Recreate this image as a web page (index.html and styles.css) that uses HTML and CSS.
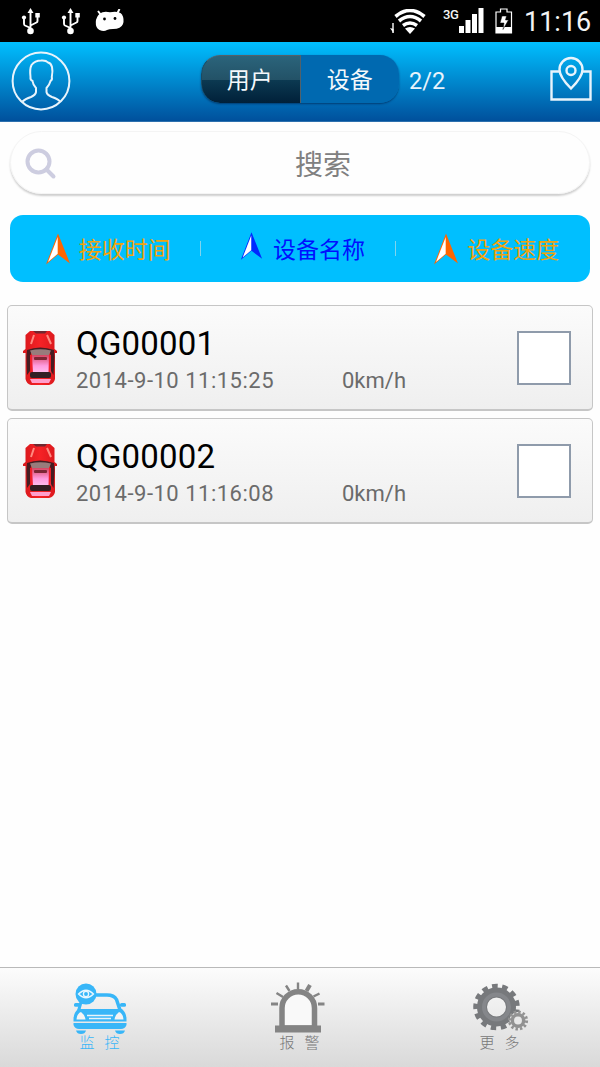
FILE: index.html
```html
<!DOCTYPE html>
<html lang="zh-CN">
  <head>
    <meta charset="utf-8">
    <meta name="viewport" content="width=device-width, initial-scale=1.0">
    <title>监控</title>
    <link rel="stylesheet" href="styles.css">
  </head>

  <body>

    <!-- shared icons -->
    <svg class="defs" width="0" height="0">
      <linearGradient id="carRed" x1="0" y1="0" x2="1" y2="0">
        <stop offset="0" stop-color="#d8181c"/>
        <stop offset=".5" stop-color="#f62226"/>
        <stop offset="1" stop-color="#d8181c"/>
      </linearGradient>
      <linearGradient id="carRoof" x1="0" y1="0" x2="0" y2="1">
        <stop offset="0" stop-color="#d64560"/>
        <stop offset=".6" stop-color="#ff9ce0"/>
        <stop offset="1" stop-color="#ffc0ee"/>
      </linearGradient>
      <symbol id="usb" viewBox="0 0 20 28">
        <path d="M9.500 23V4M9.500 20L4 17.500Q3 17 3 15.500V10M9.500 17.500L15.500 14.500Q16.500 14 16.500 13V8" fill="none" stroke="#fff" stroke-width="1.900"/>
        <path d="M9.500 0L12.500 5H6.500z" fill="#fff"/>
        <circle cx="9.500" cy="23" r="3.300" fill="#fff"/>
        <circle cx="3" cy="9.500" r="2.100" fill="#fff"/>
        <rect x="14.300" y="5" width="4.500" height="4.500" fill="#fff"/>
      </symbol>
      <symbol id="arrow" viewBox="0 0 26 32">
        <path d="M13 .5L25 30.500L13 21.500L1 31.500z" fill="currentColor"/>
        <path d="M12.700 4V20.800L3 29z" fill="#fff"/>
      </symbol>
      <symbol id="car" viewBox="0 0 34 54">
        <path d="M7 0H27L31.500 4V18L34 20V22L32 22V48Q31 53 26 54H8Q3.500 53 2.500 48V22L0 22V20L2.500 18V4z" fill="url(#carRed)"/>
        <path d="M10 0H24L22 2.500H13z" fill="#702830"/>
        <path d="M11 4L8 13M24 4L28 13" stroke="#ff8a80" stroke-width="2"/>
        <path d="M4 19Q17 14 31 19L31.500 26L30.500 44L28 40V27L27 22H8L7 27V40L4 44L3.500 26z" fill="#451d22"/>
        <path d="M7 19.500Q17 17 28 19.500L26 24H9z" fill="#987c7c"/>
        <path d="M9 24H26L27.500 42H8z" fill="url(#carRoof)"/>
        <path d="M8 24L9 42M27 24L26.500 42" stroke="#f0202c" stroke-width="2"/>
        <rect x="11" y="26" width="13" height="3" rx="1" fill="#7c2735"/>
        <rect x="7" y="41" width="21" height="6" rx="2" fill="#332024"/>
        <path d="M7 48H28L26 52H9z" fill="#ff9fcb"/>
      </symbol>
    </svg>

    <div class="screen">

      <div class="status">
        <svg class="usb" width="20" height="28"><use href="#usb"/></svg>
        <svg class="usb" width="20" height="28"><use href="#usb"/></svg>
        <svg class="droid" width="30" height="24" viewBox="0 0 30 24">
          <path d="M3 2L6 6M24.500 0L22 5" stroke="#fff" stroke-width="2"/>
          <path d="M5 4.500Q8 2 15 3.200Q24 1.500 27 5.500Q29.500 10 28 15Q26 20 18 20Q14 20 12 21Q9 23 4.500 21Q.5 19 .8 13Q1 8 5 4.500z" fill="#fff"/>
          <circle cx="9.500" cy="10" r="1.400"/><circle cx="20" cy="9.500" r="1.400"/>
        </svg>
        <svg class="wifi" width="36" height="26" viewBox="0 0 36 26">
          <path d="M3 14V24" stroke="#fff" stroke-width="1.400"/>
          <path d="M3.500 24V20L0 19z" fill="#fff"/>
          <path d="M5.500 7.500Q20 -4.500 34.500 7.500M9 12Q20 3 31 12M13 16.500Q20 11.500 27 16.500" fill="none" stroke="#fff" stroke-width="3.600"/>
          <path d="M15 19.500Q20 16.500 25 19.500L20 25z" fill="#fff"/>
        </svg>
        <span class="net">3G</span>
        <svg class="signal" width="26" height="26" viewBox="0 0 26 26" fill="#fff">
          <path d="M0 18h5v7H0zM6.500 12h5v13h-5zM13 6h5v19h-5zM19.500 0h5v25h-5z"/>
        </svg>
        <svg class="battery" width="18" height="27" viewBox="0 0 18 27">
          <path d="M1 4H5.500V1H12V4H16.500V25H1z" fill="none" stroke="#fff" stroke-width="1.200"/>
          <path d="M1 19H16.500V25H1z" fill="#fff"/>
          <path d="M7 8H11.500L10.500 12H13.500L8 21.500L9 15H5z" fill="#fff" stroke="#000" stroke-width=".5"/>
        </svg>
        <span class="clock">11:16</span>
      </div>

      <div class="header">
        <svg class="user" width="60" height="60" viewBox="0 0 60 60" fill="none" stroke="#e8f4fc" stroke-width="2">
          <circle cx="30" cy="30" r="28.400"/>
          <path d="M11.500 50.500Q14 48 20 46Q24.500 44 25 41V37Q22 34 21.500 30Q19 29 19.500 26Q18.500 18 20.500 14Q24 9.500 30 9.500Q35 9 37 11.500Q40 12 41 16Q42 20 40.800 26Q41.500 29 39.500 30Q38.500 34 35.500 37V41Q36 44 41 46Q47 48 49 50.500"/>
        </svg>
        <div class="switch">
          <div class="tab tab-user">用户</div>
          <div class="tab tab-device">设备</div>
        </div>
        <span class="count">2/2</span>
        <svg class="map" width="42" height="46" viewBox="0 0 42 46" fill="none" stroke="#e8f4fc" stroke-width="2.400">
          <path d="M10 15.500H1.500V43.500H40.500V15.500H32"/>
          <path d="M21 32.500Q9.500 21 9.500 13.500A11.500 11.500 0 0 1 32.500 13.500Q32.500 21 21 32.500z"/>
          <circle cx="21" cy="14.500" r="4.500"/>
        </svg>
      </div>

      <div class="search">
        <svg width="32" height="32" viewBox="0 0 32 32" fill="none" stroke="#cdcde0" stroke-width="4">
          <circle cx="13.500" cy="13.500" r="11"/>
          <path d="M21.500 21.500L28.500 28.500" stroke-linecap="round"/>
        </svg>
        <span class="placeholder">搜索</span>
      </div>

      <div class="sort">
        <div class="sort-item">
          <svg width="26" height="32"><use href="#arrow"/></svg>
          <span>接收时间</span>
        </div>
        <div class="sort-item active">
          <svg width="23" height="30"><use href="#arrow"/></svg>
          <span>设备名称</span>
        </div>
        <div class="sort-item">
          <svg width="26" height="32"><use href="#arrow"/></svg>
          <span>设备速度</span>
        </div>
      </div>

      <div class="list">
        <div class="card">
          <svg class="car" width="34" height="54" preserveAspectRatio="none"><use href="#car"/></svg>
          <div class="info">
            <div class="name">QG00001</div>
            <div class="detail"><span class="time">2014-9-10 11:15:25</span><span class="speed">0km/h</span></div>
          </div>
          <div class="check"></div>
        </div>
        <div class="card">
          <svg class="car" width="34" height="54"><use href="#car"/></svg>
          <div class="info">
            <div class="name">QG00002</div>
            <div class="detail"><span class="time">2014-9-10 11:16:08</span><span class="speed">0km/h</span></div>
          </div>
          <div class="check"></div>
        </div>
      </div>

      <div class="footer">
        <div class="nav active">
          <svg width="56" height="52" viewBox="0 0 56 52">
            <path d="M23 13H35Q42 13 44.500 17.500L49 31" fill="none" stroke="#38b6f8" stroke-width="3.500"/>
            <path d="M9 20L6 31" stroke="#38b6f8" stroke-width="3"/>
            <path d="M6 27H50Q54.500 31 54.500 37V39.500H1.500V37Q1.500 31 6 27z" fill="#38b6f8"/>
            <path d="M1.500 41H54.500V43Q53 47 49 47H7Q3 47 1.500 43z" fill="#38b6f8"/>
            <path d="M4 48.500H14Q13 52 9 52Q5 52 4 48.500zM43 48.500H53Q52 52 48 52Q44 52 43 48.500z" fill="#38b6f8"/>
            <rect x="2" y="21" width="6" height="3.800" rx="1.500" fill="#38b6f8"/>
            <rect x="48" y="21" width="6" height="3.800" rx="1.500" fill="#38b6f8"/>
            <path d="M4.500 37.500Q5 31.500 9 30Q13 33 13.500 37.500zM51.500 37.500Q51 31.500 47 30Q43 33 42.500 37.500z" fill="#f4f4f4"/>
            <path d="M15 33.500H41M17 36.500H39" stroke="#e8f4fa" stroke-width="1.300"/>
            <circle cx="14" cy="12" r="10.500" fill="#38b6f8"/>
            <path d="M6.500 12Q14 4.500 21.500 12Q14 19.500 6.500 12z" fill="none" stroke="#e8f7ff" stroke-width="1.300"/>
            <circle cx="14" cy="12" r="2.600" fill="none" stroke="#e8f7ff" stroke-width="1.300"/>
          </svg>
          <span>监控</span>
        </div>
        <div class="nav">
          <svg width="56" height="52" viewBox="0 0 56 52">
            <path d="M10 46V26A16.200 16.200 0 0 1 42.500 26V46z" fill="#f9f9f9" stroke="#848484" stroke-width="5.500"/>
            <path d="M3 43.500H49V50.500H3z" fill="#848484"/>
            <path d="M26 .5V7M14 3.500L17.500 9M4.500 11L11 15M41.500 14.500L47.500 11.500" stroke="#848484" stroke-width="2.400"/>
            <path d="M38 3L34.500 9" stroke="#848484" stroke-width="4"/>
            <path d="M-1 22H6M46 22H52.500" stroke="#848484" stroke-width="3"/>
          </svg>
          <span>报警</span>
        </div>
        <div class="nav">
          <svg width="56" height="52" viewBox="0 0 56 52" fill="none">
            <circle cx="24.500" cy="25" r="14.500" stroke="#77797c" stroke-width="10"/>
            <circle cx="24.500" cy="25" r="20.500" stroke="#77797c" stroke-width="5.500" stroke-dasharray="5.400 4.508" transform="rotate(7 24.500 25)"/>
            <circle cx="24.500" cy="25" r="12.500" stroke="#85878b" stroke-width="4"/>
            <circle cx="46" cy="38.500" r="8.500" fill="#e8e8e8"/>
            <circle cx="46" cy="38.500" r="5.700" stroke="#929292" stroke-width="3.500"/>
            <circle cx="46" cy="38.500" r="8.600" stroke="#929292" stroke-width="3" stroke-dasharray="2.400 2.103"/>
          </svg>
          <span>更多</span>
        </div>
      </div>

    </div>
  </body>
</html>
```

FILE: styles.css
```css
* {
  margin: 0;
  padding: 0;
  box-sizing: border-box;
}

html, body {
  width: 100%;
  height: 100%;
}

body {
  background: #fefefe;
  font-family: Roboto, "Noto Sans CJK SC", sans-serif;
}

svg {
  display: block;
  flex: none;
}

.defs {
  height: 0;
}

.screen {
  display: flex;
  flex-direction: column;
  height: 1067px;
  width: 600px;
  overflow: hidden;
}

.status {
  display: flex;
  align-items: flex-start;
  height: 42px;
  padding: 8px 10px 0 21px;
  background: #000;
  color: #f4f4f4;
}

.usb {
  margin-right: 20px;
}

.droid {
  margin-left: -6px;
  margin-top: 1px;
}

.wifi {
  margin-left: auto;
  margin-top: 1px;
}

.net {
  width: 17px;
  margin: -3px 0 0 17px;
  font-size: 13px;
  font-weight: 500;
  line-height: 19px;
  letter-spacing: -.5px;
}

.signal {
  margin-left: -1px;
}

.battery {
  margin-left: 10px;
}

.clock {
  margin-left: 11px;
  width: 66px;
  font-size: 27px;
  line-height: 29px;
  white-space: nowrap;
}

.header {
  display: flex;
  align-items: center;
  height: 80px;
  padding: 0 8px 2px 11px;
  background: linear-gradient(#00bfff, #00509c);
  border-bottom: 1px solid #2c70ae;
}

.switch {
  display: flex;
  width: 198px;
  height: 48px;
  margin-top: -3px;
  margin-left: 130px;
  border-radius: 19px;
  overflow: hidden;
  box-shadow: 0 1px 2px rgba(0, 30, 70, .6);
}

.tab {
  width: 99px;
  font-size: 23px;
  line-height: 51px;
  text-align: center;
  color: #f4f8fb;
}

.tab-user {
  width: 100px;
  padding-right: 2px;
  line-height: 49px;
  background: linear-gradient(#2b647b, #235267 50%, #0c3a52 50%, #002039);
  border: 1px solid #52616a;
  border-left-color: #1b4a62;
  border-bottom: 0;
  border-radius: 19px 0 0 19px;
}

.tab-device {
  background: #0069b0;
}

.count {
  margin-left: 10px;
  font-size: 23.5px;
  color: #e8f4fc;
}

.map {
  margin-top: -3px;
  margin-left: auto;
}

.search {
  display: flex;
  align-items: center;
  height: 63px;
  margin: 9px 10px 0;
  padding: 3px 0 0 14px;
  border-radius: 32px;
  border: 1px solid #f4f4f4;
  box-shadow: 0 2px 2px #cfcfcf;
}

.placeholder {
  margin-left: 238px;
  padding-top: 4px;
  font-size: 28px;
  line-height: 40px;
  color: #808080;
}

.sort {
  display: flex;
  height: 67px;
  margin: 21px 10px 0;
  border-radius: 13px;
  background: #00bfff;
}

.sort-item {
  display: flex;
  align-items: center;
  justify-content: center;
  gap: 8px;
  flex: 1;
  padding-left: 4px;
  font-size: 23px;
  color: #f0a30f;
}

/* thin separator between the sort keys */
.sort-item + .sort-item::before {
  content: "";
  width: 1px;
  height: 15px;
  margin-left: -38px;
  margin-right: 29px;
  background: #7fd4ee;
}

.sort-item + .sort-item {
  padding-left: 7px;
}

.sort-item span {
  margin-top: -2px;
}

.sort-item svg {
  color: #ff6500;
}

.sort-item.active {
  gap: 10px;
  padding-left: 6px;
  color: #0010ff;
}

.sort-item.active svg {
  margin-top: -5px;
  color: #0028ff;
}

.list {
  display: flex;
  flex-direction: column;
  gap: 7px;
  padding: 23px 7px 0;
}

.card {
  display: flex;
  align-items: center;
  height: 106px;
  padding: 0 21px 0 15px;
  border: 1px solid #c6c6c6;
  border-bottom-width: 2px;
  border-radius: 5px;
  background: linear-gradient(#fbfbfb, #efefef);
}

.info {
  margin-left: 19px;
  padding-top: 7px;
}

.name {
  font-size: 33px;
  line-height: 38px;
  letter-spacing: .2px;
  color: #000;
}

.detail {
  display: flex;
  font-size: 22px;
  line-height: 35px;
  color: #6b6b6b;
}

.time {
  width: 266px;
  letter-spacing: .5px;
}

.check {
  width: 54px;
  height: 54px;
  margin-left: auto;
  background: #fff;
  border: 2px solid #8f9bab;
}

.footer {
  display: flex;
  height: 100px;
  margin-top: auto;
  border-top: 1px solid #b9b9b9;
  background: linear-gradient(#fcfcfc, #d9d9d9);
}

.nav {
  display: flex;
  flex-direction: column;
  align-items: center;
  flex: 1;
  padding-top: 14px;
  font-size: 15px;
  font-weight: 300;
  color: #777;
}

.nav svg {
  overflow: visible;
}

.nav span {
  margin-top: -1px;
  padding-left: 9px;
  line-height: 20px;
  letter-spacing: 10px;
}

.nav.active {
  color: #38b6f8;
}
```
